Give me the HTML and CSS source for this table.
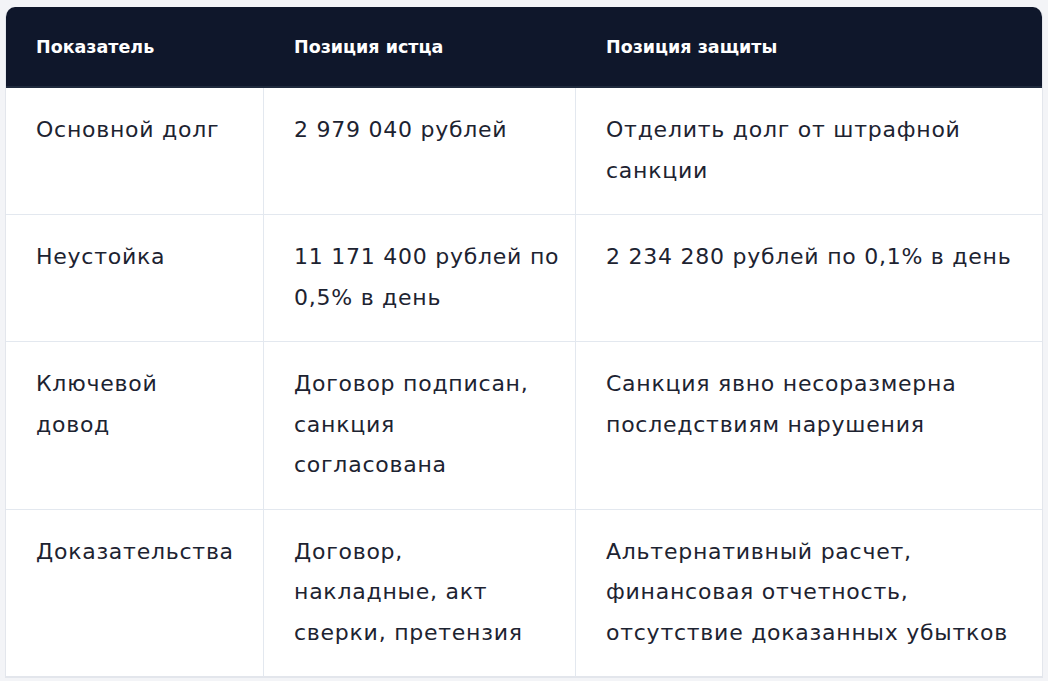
FILE: index.html
```html
<!DOCTYPE html>
<html lang="ru">
<head>
<meta charset="utf-8">
<title>Сравнение позиций</title>
<link rel="stylesheet" href="styles.css">
</head>
<body>
<div class="wrap">
  <table class="cmp">
    <colgroup>
      <col class="c1"><col class="c2"><col class="c3">
    </colgroup>
    <thead>
      <tr>
        <th>Показатель</th>
        <th>Позиция истца</th>
        <th>Позиция защиты</th>
      </tr>
    </thead>
    <tbody>
      <tr>
        <td>Основной долг</td>
        <td>2 979 040 рублей</td>
        <td>Отделить долг от штрафной<br>санкции</td>
      </tr>
      <tr>
        <td>Неустойка</td>
        <td>11 171 400 рублей по<br>0,5% в день</td>
        <td>2 234 280 рублей по 0,1% в день</td>
      </tr>
      <tr>
        <td>Ключевой<br>довод</td>
        <td>Договор подписан,<br>санкция<br>согласована</td>
        <td>Санкция явно несоразмерна<br>последствиям нарушения</td>
      </tr>
      <tr>
        <td>Доказательства</td>
        <td>Договор,<br>накладные, акт<br>сверки, претензия</td>
        <td>Альтернативный расчет,<br>финансовая отчетность,<br>отсутствие доказанных убытков</td>
      </tr>
    </tbody>
  </table>
</div>
</body>
</html>
```
FILE: styles.css
```css
html, body {
  margin: 0;
  padding: 0;
  background: #f3f4f7;
}
body {
  padding: 7px 5px 0 5px;
  font-family: "DejaVu Sans", "Noto Sans", sans-serif;
}
.wrap {
  background: #ffffff;
  border: 1px solid #e3e6ec;
  border-top: none;
  border-radius: 10px 10px 0 0;
  overflow: hidden;
}
.cmp {
  width: 100%;
  border-collapse: separate;
  border-spacing: 0;
  table-layout: fixed;
}
.c1 { width: 257px; }
.c2 { width: 312px; }
.c3 { width: auto; }
.cmp th {
  background: #0f172b;
  color: #ffffff;
  font-weight: 700;
  font-size: 17.5px;
  text-align: left;
  height: 81px;
  padding: 0 30px;
  border-bottom: 2px solid #1f2a3d;
  box-sizing: border-box;
  white-space: nowrap;
}
.cmp th + th {
  padding-left: 31px;
}
.cmp td {
  color: #1d2331;
  font-size: 22px;
  letter-spacing: 0.75px;
  line-height: 40.5px;
  padding: 22px 20px 23px 30px;
  vertical-align: top;
  border-bottom: 1px solid #e3e8ef;
  white-space: nowrap;
}
.cmp td + td {
  border-left: 1px solid #e3e8ef;
}
.cmp tbody tr:last-child td {
  border-bottom: 1px solid #e3e6ec;
}
```
